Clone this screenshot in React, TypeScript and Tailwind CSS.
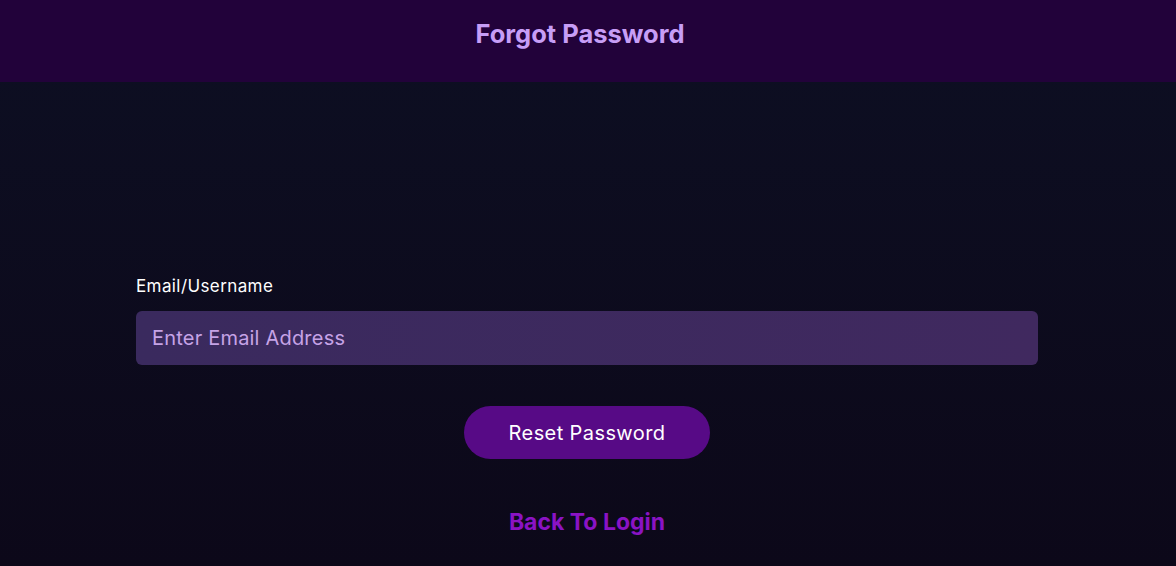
export default function App() {
  return (
    <div className="min-h-[566px] w-full flex flex-col bg-gradient-to-b from-[#0d0f23] to-[#0c0819]" style={{ fontFamily: 'Inter, "Noto Sans", sans-serif' }}>
      <header className="h-[82px] bg-[#22023a] flex items-center justify-center">
        <h1 className="text-[25.5px] font-bold text-[#c79ef6] tracking-[0px] -mt-[14px] mr-[16px]">Forgot Password</h1>
      </header>
      <main className="flex flex-col items-center pt-[194px]">
        <div className="w-[902px] -ml-[2px] flex flex-col">
          <label className="text-[17px] text-white leading-[20px] mb-[15px] tracking-[0.4px]">Email/Username</label>
          <input
            className="h-[54px] rounded-[6px] bg-gradient-to-r from-[#3a2a5e] to-[#40295f] px-[16px] text-[20px] text-[#c6a3e6] placeholder-[#c6a3e6] outline-none tracking-[0.2px]"
            placeholder="Enter Email Address"
          />
          <div className="flex justify-center mt-[41px]">
            <button className="w-[246px] h-[53px] rounded-full bg-[#570a86] text-white text-[20px] tracking-[0.4px]">Reset Password</button>
          </div>
          <div className="flex justify-center mt-[46px]">
            <a className="text-[23px] font-bold text-[#8a13c4] tracking-[0px]">Back To Login</a>
          </div>
        </div>
      </main>
    </div>
  );
}
